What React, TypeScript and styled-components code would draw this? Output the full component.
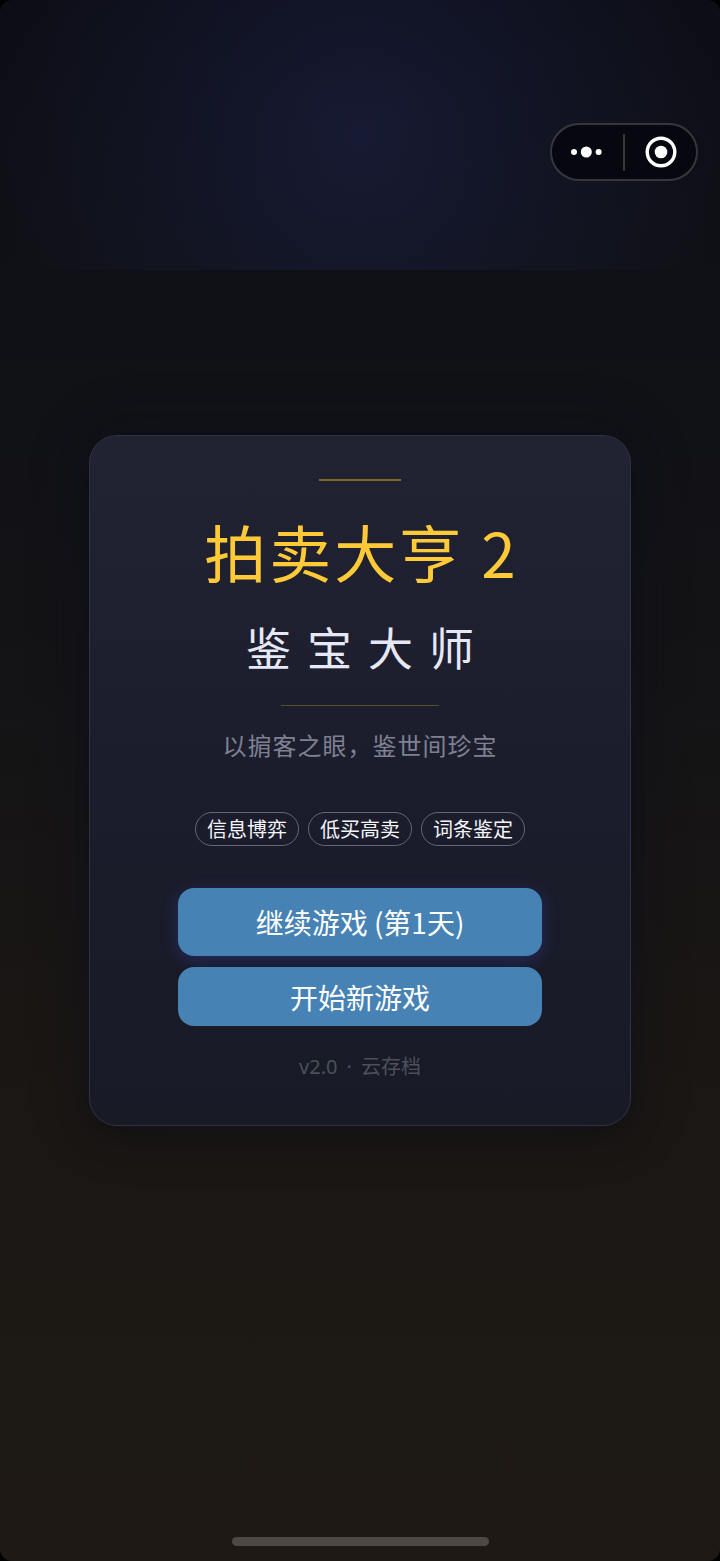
import React from "react";
import styled, { createGlobalStyle } from "styled-components";

const GlobalStyle = createGlobalStyle`
  * { box-sizing: border-box; }
  body { margin: 0; background: #000; }
`;

const Screen = styled.main`
  position: relative;
  display: flex;
  align-items: center;
  justify-content: center;
  min-height: 100vh;
  padding: 200px 89px;
  overflow: hidden;
  border-radius: 12px;
  background: linear-gradient(180deg, #0c0d15 0%, #101116 22%, #131316 40%, #1b1714 70%, #1e1914 100%);
  font-family: "Noto Sans CJK SC", sans-serif;
  color: #fff;
`;

const Glow = styled.div`
  position: absolute;
  top: 0;
  left: 0;
  right: 0;
  height: 270px;
  background: radial-gradient(circle 370px at center, rgba(28, 34, 70, 0.6), rgba(28, 34, 70, 0));
`;

const Capsule = styled.div`
  position: absolute;
  top: 123px;
  right: 22px;
  display: flex;
  align-items: center;
  width: 148px;
  height: 58px;
  border: 2px solid #36363d;
  border-radius: 29px;
  background: #07080f;
`;

const CapsuleButton = styled.button`
  display: flex;
  flex: 1;
  align-items: center;
  justify-content: center;
  height: 100%;
  padding: 0;
  border: 0;
  background: none;
  color: #fff;
`;

const CapsuleDivider = styled.span`
  width: 2px;
  height: 37px;
  background: #36363d;
`;

const Card = styled.section`
  position: relative;
  display: flex;
  flex-direction: column;
  align-items: center;
  width: 100%;
  max-width: 640px;
  padding: 43px 40px 44px;
  border: 1px solid #2f3146;
  border-radius: 28px;
  background: linear-gradient(180deg, #212333 0%, #1c1d2c 50%, #181a26 100%);
  box-shadow: 0 8px 32px rgba(0, 0, 0, 0.28), 0 0 60px rgba(20, 24, 50, 0.3);
`;

const Rule = styled.div<{ $width: number; $thickness: number; $color: string }>`
  width: ${(p) => p.$width}px;
  height: ${(p) => p.$thickness}px;
  background: ${(p) => p.$color};
`;

const Title = styled.h1`
  margin: 26px 0 0;
  padding-left: 3px;
  font-size: 62px;
  font-weight: 400;
  line-height: 88px;
  letter-spacing: 3px;
  color: #ffca38;
  white-space: nowrap;
`;

const Subtitle = styled.h2`
  margin: 20px 0 26px;
  padding-left: 16px;
  font-size: 45px;
  font-weight: 400;
  line-height: 64px;
  letter-spacing: 16px;
  color: #e6e8f5;
  white-space: nowrap;
`;

const Tagline = styled.p`
  margin: 22px 0 50px;
  font-size: 24px;
  line-height: 34px;
  letter-spacing: 1px;
  color: #7f8193;
`;

const Tags = styled.ul`
  display: flex;
  flex-wrap: wrap;
  justify-content: center;
  gap: 9px;
  margin: 0 0 42px;
  padding: 0;
  list-style: none;
`;

const Tag = styled.li`
  padding: 0 11px;
  border: 1px solid #646675;
  border-radius: 17px;
  font-size: 20px;
  line-height: 32px;
  color: #f4f5fa;
`;

const Actions = styled.div`
  display: flex;
  flex-direction: column;
  gap: 11px;
  width: 100%;
  max-width: 364px;
`;

const ActionButton = styled.button<{ $primary?: boolean }>`
  height: ${(p) => (p.$primary ? 68 : 59)}px;
  padding: 0;
  border: 0;
  border-radius: 16px;
  background: #4682b4;
  box-shadow: ${(p) => (p.$primary ? "0 4px 16px rgba(48, 63, 159, 0.45)" : "none")};
  font-family: inherit;
  font-size: 28px;
  line-height: 40px;
  color: #fff;
`;

const Version = styled.footer`
  display: flex;
  gap: 9px;
  margin-top: 26px;
  font-family: "Noto Sans", "Noto Sans CJK SC", sans-serif;
  font-size: 20px;
  line-height: 29px;
  color: #4d4f5a;
`;

const HomeIndicator = styled.div`
  position: absolute;
  bottom: 15px;
  left: 50%;
  width: 257px;
  height: 9px;
  margin-left: -128px;
  border-radius: 5px;
  background: #4d4843;
`;

const tags = ["信息博弈", "低买高卖", "词条鉴定"];

export default function App() {
  return (
    <>
      <GlobalStyle />
      <Screen>
        <Glow />
        <Capsule>
          <CapsuleButton type="button" aria-label="更多">
            <svg width="36" height="12" viewBox="0 0 36 12" fill="currentColor">
              <circle cx="4" cy="6" r="3" />
              <circle cx="16.3" cy="6" r="5.5" />
              <circle cx="28.6" cy="6" r="3" />
            </svg>
          </CapsuleButton>
          <CapsuleDivider />
          <CapsuleButton type="button" aria-label="关闭">
            <svg width="32" height="32" viewBox="0 0 32 32">
              <circle cx="16" cy="16" r="13.8" fill="none" stroke="currentColor" strokeWidth="3.4" />
              <circle cx="16" cy="16" r="6.3" fill="currentColor" />
            </svg>
          </CapsuleButton>
        </Capsule>
        <Card>
          <Rule $width={82} $thickness={2} $color="#80692f" />
          <Title>拍卖大亨 2</Title>
          <Subtitle>鉴宝大师</Subtitle>
          <Rule $width={158} $thickness={1} $color="#5a4a2c" />
          <Tagline>以掮客之眼，鉴世间珍宝</Tagline>
          <Tags>
            {tags.map((tag) => (
              <Tag key={tag}>{tag}</Tag>
            ))}
          </Tags>
          <Actions>
            <ActionButton type="button" $primary>
              继续游戏 (第1天)
            </ActionButton>
            <ActionButton type="button">开始新游戏</ActionButton>
          </Actions>
          <Version>
            <span>v2.0</span>
            <span>·</span>
            <span>云存档</span>
          </Version>
        </Card>
        <HomeIndicator />
      </Screen>
    </>
  );
}
